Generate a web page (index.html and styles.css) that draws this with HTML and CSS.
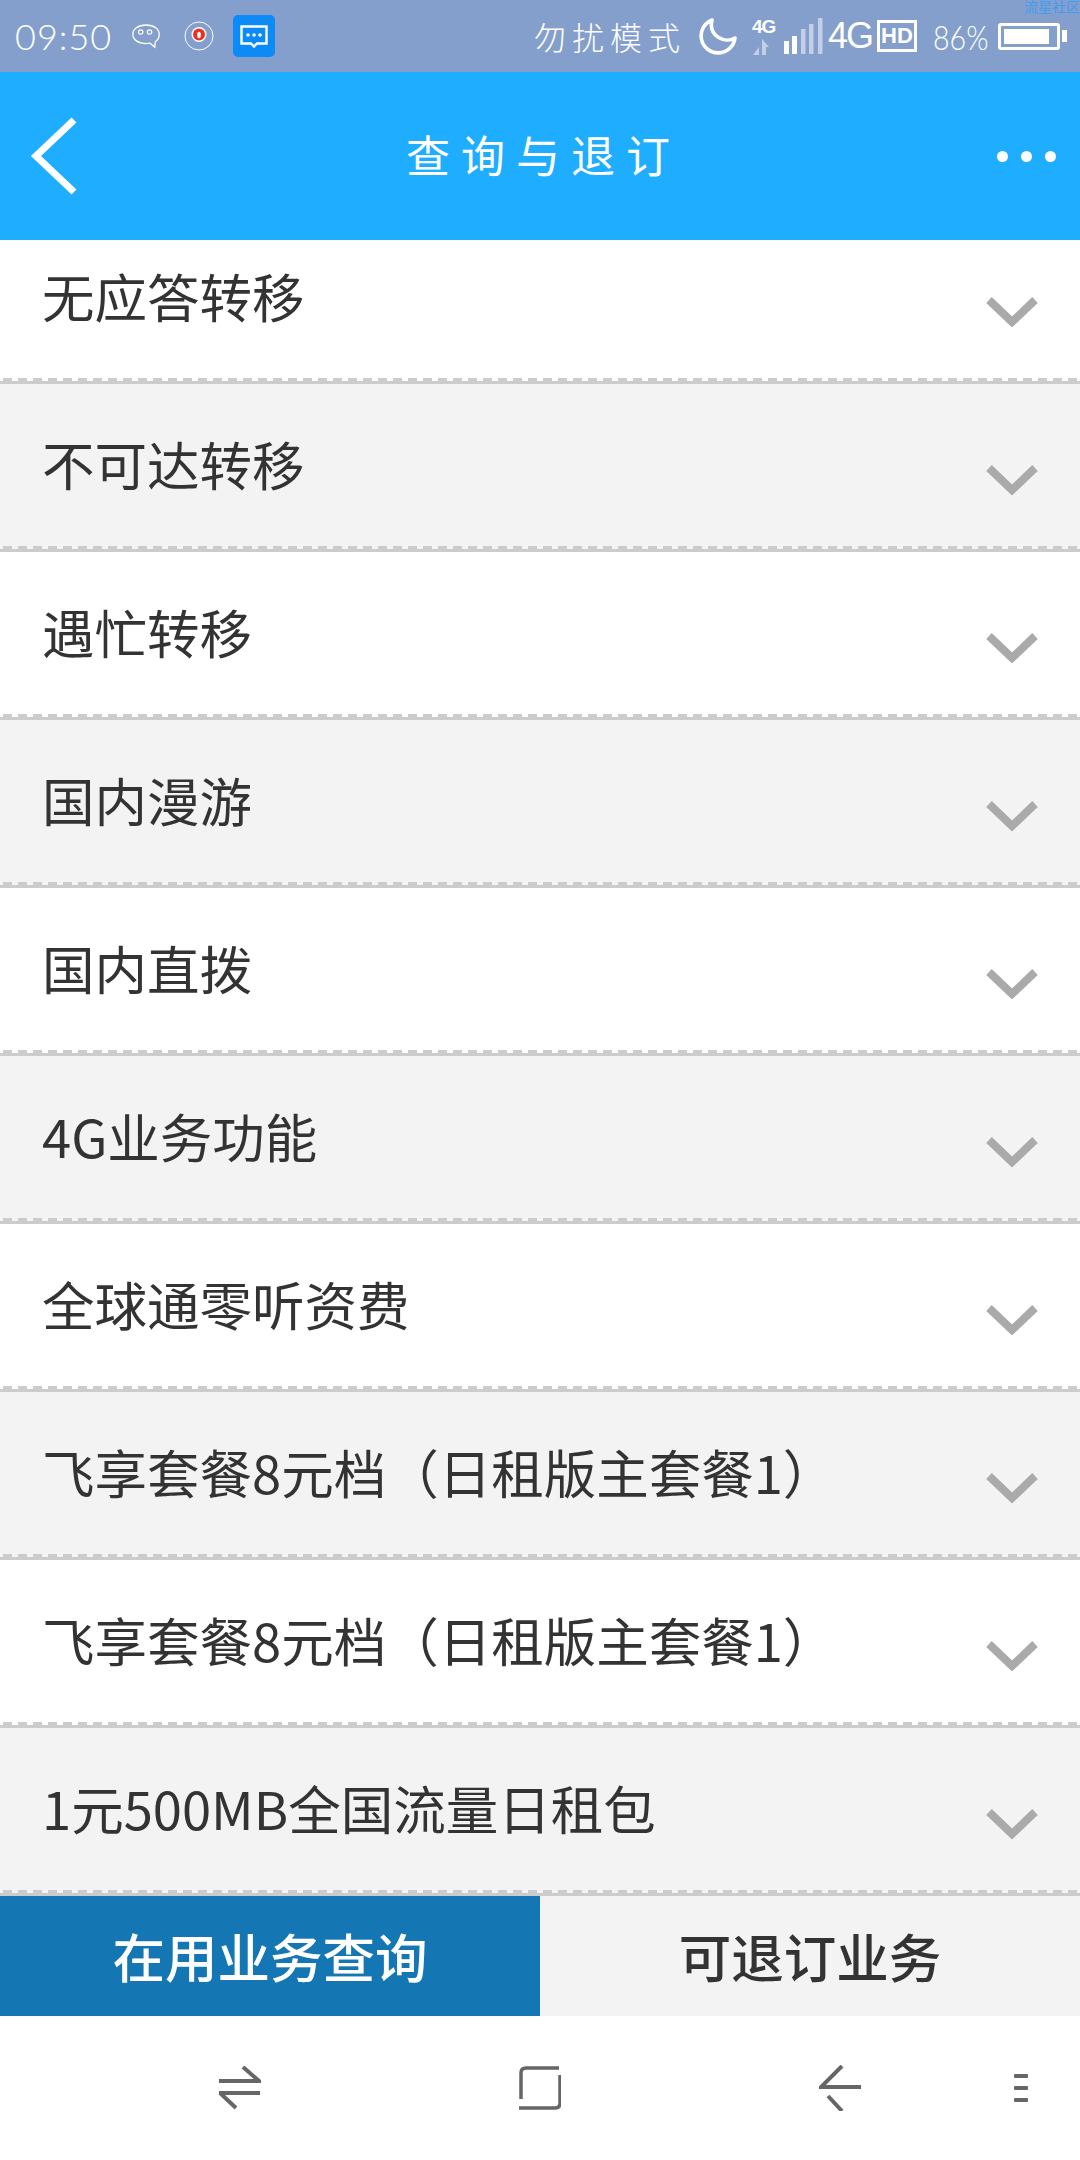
FILE: index.html
```html
<!DOCTYPE html>
<html lang="zh-CN">

<head>
    <meta charset="UTF-8">
    <title>查询与退订</title>
    <link rel="stylesheet" href="styles.css">
</head>

<body>
    <div class="status-bar">
        <span class="watermark">流星社区</span>
        <div class="status-left">
            <span class="time">09:50</span>
            <svg class="icon-wechat" width="30" height="27" viewBox="0 0 34 30">
                <path d="M17 2C8 2 2 6.500 2 12.500S8 23 17 23c1.500 0 3-.2 4.500-.5L27 27l.5-6c3-2 4.500-5 4.500-8.500C32 6.500 26 2 17 2Z" fill="none" stroke="#fff" stroke-width="1.500" />
                <circle cx="11" cy="10" r="2.500" fill="none" stroke="#fff" stroke-width="1.300" />
                <circle cx="21" cy="10" r="2.500" fill="none" stroke="#fff" stroke-width="1.300" />
            </svg>
            <svg class="icon-weibo" width="30" height="30" viewBox="0 0 30 30">
                <circle cx="15" cy="15" r="14" fill="none" stroke="#fff" stroke-width="1" />
                <circle cx="15" cy="13.500" r="7.500" fill="#fff" />
                <circle cx="15" cy="13.500" r="6" fill="#e8321e" />
                <ellipse cx="15" cy="14" rx="1.800" ry="3.200" fill="#fff" />
            </svg>
            <div class="icon-message">
                <svg width="28" height="24" viewBox="0 0 28 24">
                    <path d="M1.500 1.500h25v17H17l-3 3-3-3H1.500Z" fill="none" stroke="#fff" stroke-width="2.400" />
                    <circle cx="8" cy="10" r="1.800" fill="#fff" />
                    <circle cx="14" cy="10" r="1.800" fill="#fff" />
                    <circle cx="20" cy="10" r="1.800" fill="#fff" />
                </svg>
            </div>
        </div>
        <div class="status-right">
            <span class="dnd">勿扰模式</span>
            <svg class="icon-moon" width="39" height="38" viewBox="0 0 39 38">
                <path d="M14 3A17 17 0 1 0 37 21 C27 27 10 19 14 3Z" fill="none" stroke="#fff" stroke-width="3.600" stroke-linejoin="round" />
            </svg>
            <div class="net-small">
                <span>4G</span>
                <svg width="18" height="16" viewBox="0 0 18 16">
                    <path d="M7 0v16H1l6-8ZM10 0l7 8h-3v8h-4Z" fill="#c3cfe6" />
                </svg>
            </div>
            <svg class="icon-signal" width="39" height="38" viewBox="0 0 39 38">
                <rect x="0" y="24" width="5" height="13" fill="#fff" />
                <rect x="8" y="19" width="5" height="18" fill="#fff" />
                <rect x="17" y="12" width="4.500" height="25" fill="#c3cfe6" />
                <rect x="25" y="7" width="4.500" height="30" fill="#c3cfe6" />
                <rect x="34" y="1" width="4.500" height="36" fill="#c3cfe6" />
            </svg>
            <span class="net-large">4G</span>
            <span class="hd">HD</span>
            <span class="percent">86%</span>
            <div class="battery">
                <div class="battery-fill"></div>
            </div>
        </div>
    </div>

    <div class="top-bar">
        <svg class="back" width="50" height="84" viewBox="0 0 50 84">
            <path d="M44 6 6 42l38 36" fill="none" stroke="#fff" stroke-width="7" />
        </svg>
        <h1 class="title">查询与退订</h1>
        <div class="more">
            <i></i>
            <i></i>
            <i></i>
        </div>
    </div>

    <div class="list">
        <div class="list-inner">
            <div class="row"><span>无应答转移</span><svg class="chevron" width="52" height="30" viewBox="0 0 52 30"><path d="M3 3 26 25 49 3" /></svg></div>
            <div class="row alt"><span>不可达转移</span><svg class="chevron" width="52" height="30" viewBox="0 0 52 30"><path d="M3 3 26 25 49 3" /></svg></div>
            <div class="row"><span>遇忙转移</span><svg class="chevron" width="52" height="30" viewBox="0 0 52 30"><path d="M3 3 26 25 49 3" /></svg></div>
            <div class="row alt"><span>国内漫游</span><svg class="chevron" width="52" height="30" viewBox="0 0 52 30"><path d="M3 3 26 25 49 3" /></svg></div>
            <div class="row"><span>国内直拨</span><svg class="chevron" width="52" height="30" viewBox="0 0 52 30"><path d="M3 3 26 25 49 3" /></svg></div>
            <div class="row alt"><span>4G业务功能</span><svg class="chevron" width="52" height="30" viewBox="0 0 52 30"><path d="M3 3 26 25 49 3" /></svg></div>
            <div class="row"><span>全球通零听资费</span><svg class="chevron" width="52" height="30" viewBox="0 0 52 30"><path d="M3 3 26 25 49 3" /></svg></div>
            <div class="row alt"><span>飞享套餐8元档（日租版主套餐1）</span><svg class="chevron" width="52" height="30" viewBox="0 0 52 30"><path d="M3 3 26 25 49 3" /></svg></div>
            <div class="row"><span>飞享套餐8元档（日租版主套餐1）</span><svg class="chevron" width="52" height="30" viewBox="0 0 52 30"><path d="M3 3 26 25 49 3" /></svg></div>
            <div class="row alt"><span>1元500MB全国流量日租包</span><svg class="chevron" width="52" height="30" viewBox="0 0 52 30"><path d="M3 3 26 25 49 3" /></svg></div>
        </div>
    </div>

    <div class="tabs">
        <div class="tab active">在用业务查询</div>
        <div class="tab">可退订业务</div>
    </div>

    <div class="nav-bar">
        <svg class="nav-swap" width="42" height="44" viewBox="0 0 42 44">
            <path d="M0 15h40L24 1M41 27H1l16 15" fill="none" stroke="#666" stroke-width="4" />
        </svg>
        <svg class="nav-home" width="42" height="44" viewBox="0 0 42 44">
            <path d="M2 33V7q0-5 5-5h33M41 9v28q0 5-5 5H0" fill="none" stroke="#666" stroke-width="3.500" />
        </svg>
        <svg class="nav-back" width="42" height="46" viewBox="0 0 42 46">
            <path d="M23 1 2 22h40M9 31l14 15" fill="none" stroke="#666" stroke-width="4" />
        </svg>
        <div class="nav-menu">
            <i></i>
            <i></i>
            <i></i>
        </div>
    </div>
</body>

</html>
```

FILE: styles.css
```css
* {
    box-sizing: border-box;
}

body {
    margin: 0;
    width: 1080px;
    height: 2160px;
    overflow: hidden;
    background: #fff;
    font-family: "Noto Sans CJK SC", "Noto Sans", sans-serif;
    color: #333;
}

svg {
    display: block;
    flex: none;
}

/* status bar */
.status-bar {
    position: relative;
    display: flex;
    justify-content: space-between;
    align-items: center;
    height: 72px;
    padding: 0 20px 0 15px;
    background-color: #859fcd;
    color: #fff;
}

.watermark {
    position: absolute;
    top: -2px;
    right: 0;
    font-size: 14px;
    line-height: 16px;
    color: #3f9cf0;
}

.status-left,
.status-right {
    display: flex;
    align-items: center;
}

.time {
    width: 95px;
    font-family: Lato, "Noto Sans", sans-serif;
    font-weight: 300;
    font-size: 36px;
    letter-spacing: 1px;
}

.icon-wechat {
    margin-left: 21px;
}

.icon-weibo {
    margin-left: 23px;
}

.icon-message {
    display: flex;
    align-items: center;
    justify-content: center;
    width: 42px;
    height: 42px;
    margin-left: 19px;
    padding-top: 2px;
    border-radius: 5px;
    background-color: #0c8af5;
}

.dnd {
    width: 150px;
    font-size: 32px;
    font-weight: 300;
    letter-spacing: 6px;
    white-space: nowrap;
}

.icon-moon {
    margin-left: 14px;
}

.net-small {
    display: flex;
    flex-direction: column;
    align-items: flex-start;
    width: 24px;
    margin-left: 15px;
    font-family: "Liberation Sans", sans-serif;
    font-size: 19px;
    font-weight: 700;
    line-height: 19px;
    letter-spacing: -1px;
}

.net-small svg {
    margin-top: 3px;
}

.icon-signal {
    margin-left: 8px;
}

.net-large {
    width: 44px;
    margin-left: 5px;
    font-family: "Liberation Sans", sans-serif;
    font-size: 36px;
    letter-spacing: -2px;
}

.hd {
    width: 40px;
    height: 32px;
    margin-left: 5px;
    border: 3px solid #fff;
    font-family: "Liberation Sans", sans-serif;
    font-size: 22px;
    font-weight: 700;
    line-height: 26px;
    text-align: center;
}

.percent {
    width: 53px;
    margin-left: 16px;
    font-family: Lato, "Noto Sans", sans-serif;
    font-weight: 300;
    font-size: 34px;
    white-space: nowrap;
    transform: scaleX(.84);
    transform-origin: left center;
}

.battery {
    position: relative;
    width: 62px;
    height: 27px;
    margin-left: 12px;
    padding: 3px;
    border: 3px solid #fff;
    border-radius: 3px;
}

.battery::after {
    content: "";
    position: absolute;
    top: 4px;
    right: -10px;
    width: 5px;
    height: 12px;
    background: #fff;
}

.battery-fill {
    width: 90%;
    height: 100%;
    background: #fff;
}

/* top bar */
.top-bar {
    display: flex;
    align-items: center;
    height: 168px;
    padding: 0 24px 0 30px;
    background-color: #1eadff;
    color: #fff;
}

.title {
    flex: 1;
    margin: 0;
    padding: 0 0 5px 10px;
    font-size: 44px;
    font-weight: 400;
    letter-spacing: 11px;
    text-align: center;
}

.more {
    display: flex;
    gap: 13px;
}

.more i {
    width: 11px;
    height: 11px;
    border-radius: 50%;
    background: #fff;
}

/* list */
.list {
    height: 1656px;
    overflow: hidden;
}

.list-inner {
    margin-top: -24px;
}

.row {
    display: flex;
    justify-content: space-between;
    height: 168px;
    padding: 0 42px 0 42px;
    border-bottom: 3px solid #ccc;
    background-color: #fff;
    background-image: repeating-linear-gradient(90deg, transparent 0, transparent 3px, #ccc 3px, #ccc 12px, transparent 12px, transparent 15px);
    background-repeat: no-repeat;
    background-size: 100% 3px;
    background-position: left bottom;
    font-size: 52.500px;
    line-height: 158px;
    white-space: nowrap;
}

.row.alt {
    background-color: #f3f3f3;
}

.chevron {
    margin-top: 81px;
}

.chevron path {
    fill: none;
    stroke: #aaa;
    stroke-width: 8;
}

/* bottom tabs */
.tabs {
    display: flex;
    height: 120px;
}

.tab {
    flex: 1;
    background-color: #f3f3f3;
    font-size: 52.500px;
    font-weight: 500;
    line-height: 118px;
    text-align: center;
}

.tab.active {
    background-color: #1576b4;
    color: #fff;
}

/* android nav */
.nav-bar {
    display: flex;
    align-items: center;
    height: 144px;
    padding: 0 0 0 219px;
    background: #fff;
}

.nav-home {
    margin-left: 258px;
}

.nav-back {
    margin-left: 258px;
}

.nav-menu {
    display: flex;
    flex-direction: column;
    gap: 8px;
    margin-left: 153px;
}

.nav-menu i {
    width: 14px;
    height: 4px;
    border-radius: 1px;
    background: #666;
}
```
